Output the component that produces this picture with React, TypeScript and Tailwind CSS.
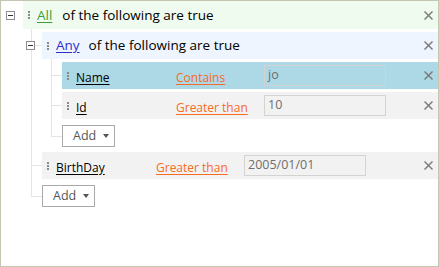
import React from "react";

const Handle = () => (
  <div className="flex flex-col gap-[1px] w-[2px] shrink-0">
    <div className="w-[2px] h-[2px] bg-[#8a8a8a]" />
    <div className="w-[2px] h-[2px] bg-[#8a8a8a]" />
    <div className="w-[2px] h-[2px] bg-[#8a8a8a]" />
  </div>
);

const CloseX = () => (
  <svg width="9" height="9" viewBox="0 0 9 9" className="shrink-0 mr-[5px]">
    <line x1="0.5" y1="0.5" x2="8.5" y2="8.5" stroke="#7a7a7a" strokeWidth="1.4" />
    <line x1="8.5" y1="0.5" x2="0.5" y2="8.5" stroke="#7a7a7a" strokeWidth="1.4" />
  </svg>
);

const Box = () => (
  <div className="w-[9px] h-[9px] border border-[#8c8c8c] bg-white flex items-center justify-center">
    <div className="w-[5px] h-px bg-[#333]" />
  </div>
);

const HeaderRow = ({ bg, link, linkColor, gap }: { bg: string; link: string; linkColor: string; gap: string }) => (
  <div className={`flex-1 flex items-center ${bg}`}>
    <div className="ml-[5px]">
      <Handle />
    </div>
    <span className={`ml-[7px] underline underline-offset-2 text-[13.5px] ${linkColor}`}>{link}</span>
    <span className={`${gap} text-[13.5px] text-black`}>of the following are true</span>
    <div className="flex-1" />
    <CloseX />
  </div>
);

const RuleRow = ({ bg, field, op, value }: { bg: string; field: string; op: string; value: string }) => (
  <div className={`h-[27px] flex items-center ${bg}`}>
    <div className="ml-[5px]">
      <Handle />
    </div>
    <span className="ml-[7px] w-[100px] shrink-0">
      <span className="underline underline-offset-2 text-black text-[12px]">{field}</span>
    </span>
    <span className="w-[88px] shrink-0">
      <span className="underline underline-offset-2 text-[#f76b22] text-[12px]">{op}</span>
    </span>
    <div className="w-[122px] h-[21px] border border-[#d3d3d3] flex items-center pl-[3px] text-[12.5px] text-[#6e6e6e] shrink-0">
      {value}
    </div>
    <div className="flex-1" />
    <CloseX />
  </div>
);

const AddButton = () => (
  <div className="w-[53px] h-[22px] border border-[#a9a9a9] bg-white flex items-center text-[12.5px] text-[#555]">
    <span className="ml-[10px]">Add</span>
    <div className="flex-1" />
    <div className="mr-[5px] w-0 h-0 border-l-[3px] border-r-[3px] border-t-[4px] border-l-transparent border-r-transparent border-t-[#555]" />
  </div>
);

export default function App() {
  return (
    <div
      className="w-[439px] h-[267px] border border-[#c4c6b0] bg-white overflow-hidden"
      style={{ fontFamily: '"Open Sans", "Noto Sans", sans-serif' }}
    >
      {/* All header */}
      <div className="flex h-[28px]">
        <div className="w-[22px] shrink-0 flex items-center pl-[5px]">
          <Box />
        </div>
        <HeaderRow bg="bg-[#f0fbef]" link="All" linkColor="text-[#3b9f3b]" gap="ml-[10px]" />
      </div>

      {/* All children */}
      <div className="flex flex-col pl-[22px]">
        {/* Any group */}
        <div className="flex">
          <div className="relative w-[19px] shrink-0">
            <div className="absolute left-[8px] top-0 bottom-0 w-px bg-[#e4e4e4]" />
            <div className="absolute left-[8px] top-[16px] w-[11px] h-px bg-[#e4e4e4]" />
            <div className="absolute left-[3px] top-[12px]">
              <Box />
            </div>
          </div>
          <div className="flex-1 flex flex-col pt-[3px]">
            <div className="h-[27px] flex">
              <HeaderRow bg="bg-[#eef5fe]" link="Any" linkColor="text-[#2f2fd0]" gap="ml-[9px]" />
            </div>
            <div className="flex flex-col">
              <div className="flex">
                <div className="relative w-[20px] shrink-0">
                  <div className="absolute left-[9px] top-0 bottom-0 w-px bg-[#e4e4e4]" />
                  <div className="absolute left-[9px] top-[16px] w-[11px] h-px bg-[#e4e4e4]" />
                </div>
                <div className="flex-1 pt-[3px]">
                  <RuleRow bg="bg-[#add8e6]" field="Name" op="Contains" value="jo" />
                </div>
              </div>
              <div className="flex">
                <div className="relative w-[20px] shrink-0">
                  <div className="absolute left-[9px] top-0 bottom-0 w-px bg-[#e4e4e4]" />
                  <div className="absolute left-[9px] top-[16px] w-[11px] h-px bg-[#e4e4e4]" />
                </div>
                <div className="flex-1 pt-[3px]">
                  <RuleRow bg="bg-[#f2f2f2]" field="Id" op="Greater than" value="10" />
                </div>
              </div>
              <div className="flex">
                <div className="relative w-[20px] shrink-0">
                  <div className="absolute left-[9px] top-0 h-[18px] w-px bg-[#e4e4e4]" />
                  <div className="absolute left-[9px] top-[17px] w-[11px] h-px bg-[#e4e4e4]" />
                </div>
                <div className="flex-1 pt-[6px]">
                  <AddButton />
                </div>
              </div>
            </div>
          </div>
        </div>

        {/* BirthDay */}
        <div className="flex">
          <div className="relative w-[19px] shrink-0">
            <div className="absolute left-[8px] top-0 bottom-0 w-px bg-[#e4e4e4]" />
            <div className="absolute left-[8px] top-[18px] w-[11px] h-px bg-[#e4e4e4]" />
          </div>
          <div className="flex-1 pt-[5px]">
            <RuleRow bg="bg-[#f2f2f2]" field="BirthDay" op="Greater than" value="2005/01/01" />
          </div>
        </div>

        {/* Add */}
        <div className="flex">
          <div className="relative w-[19px] shrink-0">
            <div className="absolute left-[8px] top-0 h-[18px] w-px bg-[#e4e4e4]" />
            <div className="absolute left-[8px] top-[17px] w-[11px] h-px bg-[#e4e4e4]" />
          </div>
          <div className="flex-1 pt-[6px]">
            <AddButton />
          </div>
        </div>
      </div>
    </div>
  );
}
